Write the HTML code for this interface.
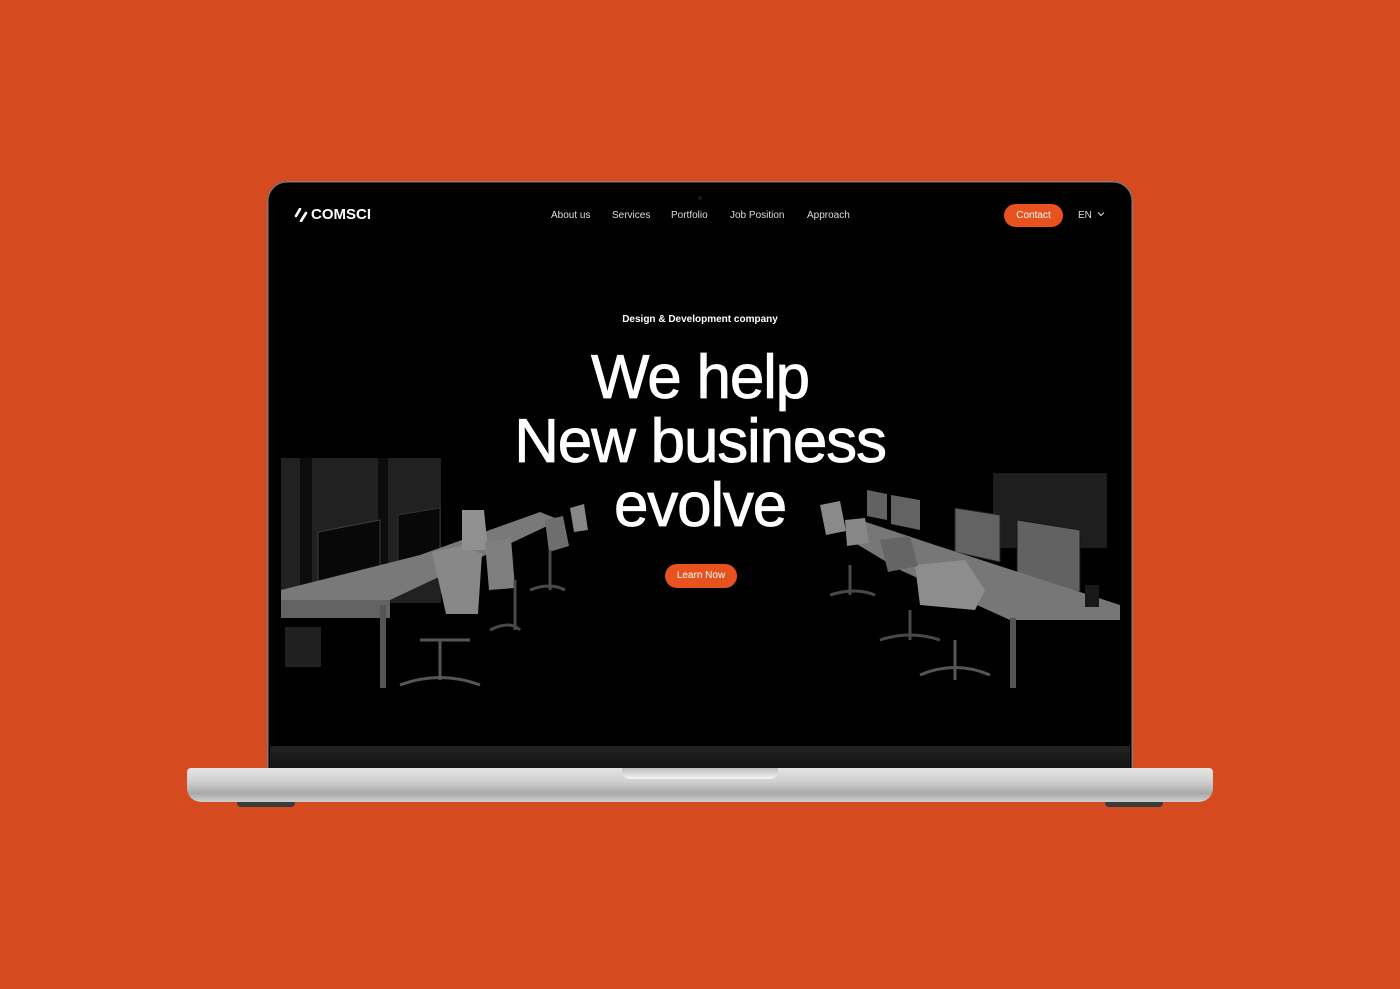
<!DOCTYPE html>
<html><head><meta charset="utf-8"><style>
*{margin:0;padding:0;box-sizing:border-box}
body{width:1400px;height:989px;background:#d64a20;position:relative;overflow:hidden;font-family:"Liberation Sans",sans-serif}
.lid{position:absolute;left:267px;top:181px;width:866px;height:589px;background:#000;border-radius:20px 20px 0 0;box-shadow:0 0 0 1.5px #8a7a72 inset}
.screen{position:absolute;left:270px;top:184px;width:860px;height:584px;background:#000;border-radius:17px 17px 0 0;overflow:hidden}
.strip{position:absolute;left:0;bottom:0;width:100%;height:22px;background:linear-gradient(#222,#151515)}
.base{position:absolute;left:187px;top:768px;width:1026px;height:34px;border-radius:4px 4px 14px 14px;background:linear-gradient(#e4e4e4 0%,#d0d0d0 40%,#a9a9a9 75%,#cfcfcf 100%)}
.notch{position:absolute;left:622px;top:768px;width:156px;height:11px;background:linear-gradient(#bdbdbd,#f4f4f4);border-radius:0 0 8px 8px}
.foot{position:absolute;top:802px;width:58px;height:5px;background:#3a3a3a;border-radius:0 0 4px 4px}
.nav{position:absolute;top:26px;font-size:10px;color:#ddd}
.logo{position:absolute;left:24px;top:22px;color:#fff;font-weight:bold;font-size:15px;letter-spacing:0px;display:flex;align-items:center}
.h{position:absolute;left:0;width:860px;text-align:center;color:#fff;font-size:62px;letter-spacing:-1.2px;-webkit-text-stroke:0.8px #fff;line-height:64px}
.btn{position:absolute;background:#e8521f;color:#fff;font-size:10px;border-radius:12px;text-align:center}
svg.ill{opacity:0.72}
</style></head><body>
<div class="lid"></div>
<div class="screen">
<svg class="ill" width="860" height="584" style="position:absolute;left:0;top:0" viewBox="270 184 860 584">
 <rect x="281" y="458" width="160" height="145" fill="#2e2e2e"/>
 <rect x="300" y="458" width="12" height="145" fill="#111"/>
 <rect x="378" y="458" width="10" height="120" fill="#111"/>
 <polygon points="318,532 380,520 380,570 318,590" fill="#0c0c0c" stroke="#555"/>
 <polygon points="398,515 440,508 440,560 398,568" fill="#0c0c0c" stroke="#444"/>
 <polygon points="281,600 390,600 560,520 540,512 420,555 281,590" fill="#a8a8a8"/>
 <polygon points="281,600 390,600 390,618 281,618" fill="#8a8a8a"/>
 <rect x="380" y="605" width="6" height="83" fill="#777"/>
 <rect x="285" y="627" width="36" height="40" fill="#2d2d2d"/>
 <path d="M432,552 l30,-6 l20,8 l-4,60 l-32,0 z" fill="#bdbdbd"/>
 <path d="M462,510 l22,0 l4,40 l-26,0z" fill="#c8c8c8"/>
 <path d="M485,542 l26,-4 l4,50 l-26,2z" fill="#b0b0b0"/>
 <path d="M545,520 l18,-4 l6,30 l-20,6z" fill="#999"/>
 <path d="M570,508 l14,-4 l4,26 l-14,2z" fill="#bbb"/>
 <path d="M420,640 l50,0 M440,640 v40 M400,685 q40,-15 80,0" stroke="#777" stroke-width="3" fill="none"/>
 <path d="M490,630 q20,-10 30,0 M515,580 v50" stroke="#666" stroke-width="3" fill="none"/>
 <path d="M530,590 q20,-8 35,0 M550,550 v40" stroke="#666" stroke-width="3" fill="none"/>
 <rect x="993" y="473" width="114" height="75" fill="#2a2a2a"/>
 <polygon points="955,508 1000,515 1000,562 955,552" fill="#8a8a8a" stroke="#333"/>
 <polygon points="1017,520 1080,530 1080,592 1017,580" fill="#888" stroke="#222"/>
 <polygon points="867,490 887,494 887,520 867,516" fill="#888"/>
 <polygon points="891,495 920,500 920,530 891,524" fill="#8a8a8a"/>
 <polygon points="860,520 935,545 1120,605 1120,620 1010,620 900,570 850,540" fill="#a5a5a5"/>
 <rect x="1010" y="618" width="6" height="70" fill="#777"/>
 <path d="M915,565 l50,-5 l20,30 l-10,20 l-55,-5z" fill="#c4c4c4"/>
 <path d="M880,540 l30,-4 l8,30 l-30,6z" fill="#8d8d8d"/>
 <path d="M820,505 l20,-4 l6,30 l-20,4z" fill="#c0c0c0"/>
 <path d="M845,520 l20,-2 l4,25 l-22,3z" fill="#bbb"/>
 <path d="M1085,585 h14 v22 h-14z" fill="#222"/>
 <path d="M920,675 q35,-15 70,0 M955,640 v40" stroke="#777" stroke-width="3" fill="none"/>
 <path d="M880,640 q30,-10 60,0 M910,610 v30" stroke="#666" stroke-width="3" fill="none"/>
 <path d="M830,595 q25,-8 45,0 M850,565 v30" stroke="#666" stroke-width="3" fill="none"/>
</svg>
<div class="logo"><svg width="14" height="14" viewBox="0 0 14 14" style="margin-right:3px"><path d="M6,1 L2,8 M12,5 L7,13" stroke="#fff" stroke-width="2.6" stroke-linecap="round"/></svg>COMSCI</div>
<div class="nav" style="left:281px">About us</div>
<div class="nav" style="left:342px">Services</div>
<div class="nav" style="left:401px">Portfolio</div>
<div class="nav" style="left:460px">Job Position</div>
<div class="nav" style="left:537px">Approach</div>
<div class="btn" style="left:734px;top:20px;width:59px;height:23px;line-height:23px">Contact</div>
<div class="nav" style="left:808px">EN</div>
<svg style="position:absolute;left:827px;top:27px" width="8" height="6" viewBox="0 0 8 6"><path d="M1,1.5 L4,4.5 L7,1.5" stroke="#ddd" stroke-width="1" fill="none"/></svg>
<div style="position:absolute;left:0;width:860px;top:130px;text-align:center;color:#fff;font-size:10px;font-weight:bold">Design &amp; Development company</div>
<div class="h" style="top:162px">We help</div>
<div class="h" style="top:226px">New business</div>
<div class="h" style="top:290px">evolve</div>
<div class="btn" style="left:395px;top:380px;width:72px;height:24px;line-height:24px">Learn Now</div>
<div class="strip"></div>
</div>
<div style="position:absolute;left:698px;top:196px;width:4px;height:4px;border-radius:50%;background:#1a1a1a"></div>
<div class="base"></div>
<div class="notch"></div>
<div class="foot" style="left:237px"></div>
<div class="foot" style="left:1105px"></div>
</body></html>
